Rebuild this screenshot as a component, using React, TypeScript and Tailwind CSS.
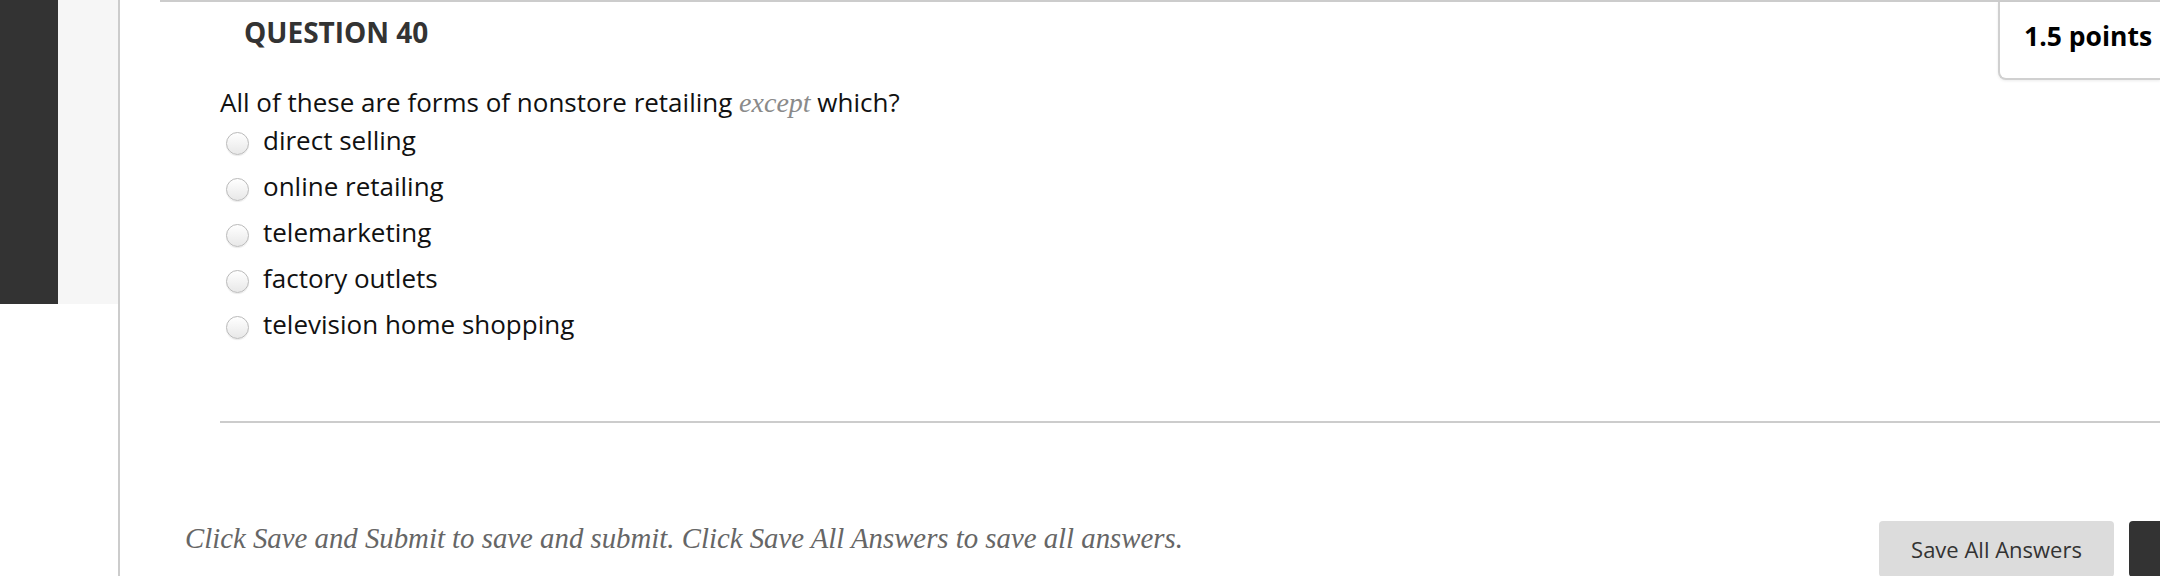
import React from 'react';

const options = [
  'direct selling',
  'online retailing',
  'telemarketing',
  'factory outlets',
  'television home shopping',
];

const sans = { fontFamily: '"Open Sans", "Liberation Sans", sans-serif' };
const serif = { fontFamily: '"Liberation Serif", "DejaVu Serif", serif' };

const Radio: React.FC = () => (
  <span className="mt-[15px] block h-[23px] w-[23px] shrink-0 rounded-full border border-[#bababa] bg-gradient-to-b from-white to-[#e8e8e8] shadow-[0_1px_1px_rgba(0,0,0,0.08)]" />
);

const App: React.FC = () => {
  return (
    <div className="flex h-[576px] w-[2160px] overflow-hidden bg-white" style={sans}>
      {/* left rail */}
      <div className="flex w-[120px] shrink-0 border-r-2 border-[#cccccc]">
        <div className="h-[304px] w-[58px] bg-[#333333]" />
        <div className="h-[304px] flex-1 bg-[#f6f6f6]" />
      </div>

      {/* main */}
      <div className="flex min-w-0 flex-1 flex-col">
        <div className="ml-[40px] flex flex-col">
          <div className="h-[2px] bg-[#cccccc]" />
          <div className="flex items-start">
            <h2 className="ml-[84px] mt-[12px] text-[28px] font-bold leading-[36px] text-[#333333]">
              QUESTION 40
            </h2>
            <div className="ml-auto h-[78px] w-[162px] rounded-bl-[8px] border-b-2 border-l-2 border-[#d0d0d0] bg-white pl-[24px] pt-[16px] shadow-[0_1px_3px_rgba(0,0,0,0.08)]">
              <span className="text-[26.5px] font-bold leading-[36px] text-black">1.5 points</span>
            </div>
          </div>

          <div className="ml-[60px] mt-[8px]">
            <p className="text-[26px] leading-[28px] text-[#111111]">
              All of these are forms of nonstore retailing{' '}
              <em className="text-[28px] text-[#8a8a8a]" style={serif}>
                except
              </em>{' '}
              which?
            </p>
            <ul className="ml-[6px]">
              {options.map((o) => (
                <li key={o} className="flex h-[46px] items-start gap-[14px]">
                  <Radio />
                  <span className="text-[26px] leading-[46px] text-[#111111]">{o}</span>
                </li>
              ))}
            </ul>
          </div>

          <div className="ml-[60px] mt-[74px] h-[2px] bg-[#cccccc]" />

          <div className="mt-[98px] flex items-start">
            <p className="ml-[25px] mt-[1px] text-[28.8px] italic leading-[32px] text-[#666666]" style={serif}>
              Click Save and Submit to save and submit. Click Save All Answers to save all answers.
            </p>
            <button className="ml-auto h-[56px] w-[235px] shrink-0 rounded-[4px] bg-[#dcdcdc] text-[22px] text-[#333333]">
              Save All Answers
            </button>
            <button className="ml-[15px] h-[56px] w-[31px] shrink-0 rounded-l-[4px] bg-[#333333]" />
          </div>
        </div>
      </div>
    </div>
  );
};

export default App;
